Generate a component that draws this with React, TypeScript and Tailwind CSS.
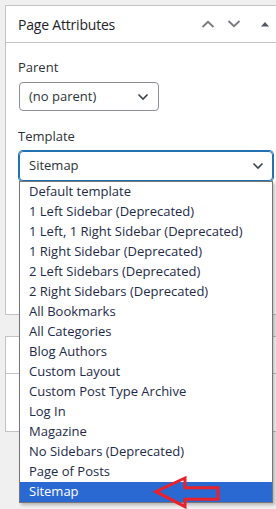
import React from "react"

const templates = [
  "Default template",
  "1 Left Sidebar (Deprecated)",
  "1 Left, 1 Right Sidebar (Deprecated)",
  "1 Right Sidebar (Deprecated)",
  "2 Left Sidebars (Deprecated)",
  "2 Right Sidebars (Deprecated)",
  "All Bookmarks",
  "All Categories",
  "Blog Authors",
  "Custom Layout",
  "Custom Post Type Archive",
  "Log In",
  "Magazine",
  "No Sidebars (Deprecated)",
  "Page of Posts",
  "Sitemap",
]

const Chevron = ({ up = false, className = "" }: { up?: boolean; className?: string }) => (
  <svg width="14" height="8" viewBox="0 0 14 8" className={className}>
    <path
      d={up ? "M1.5 7 L7 1.8 L12.5 7" : "M1.5 1 L7 6.2 L12.5 1"}
      fill="none"
      stroke="currentColor"
      strokeWidth="1.9"
    />
  </svg>
)

const SelectArrow = () => (
  <svg width="12" height="8" viewBox="0 0 12 8" className="text-[#3c434a]">
    <path d="M1.5 1.5 L6 6 L10.5 1.5" fill="none" stroke="currentColor" strokeWidth="1.6" />
  </svg>
)

const App = () => {
  return (
    <div className="relative w-[276px] h-[509px] overflow-hidden bg-[#f0f0f1] pl-[5px] pt-[5px] text-[#2c3338] font-['Open_Sans',sans-serif]">
      {/* page attributes box */}
      <div className="w-[290px] h-[310px] bg-white border border-[#c3c4c7]">
        <div className="h-[37px] flex items-center pl-3 border-b border-[#c3c4c7]">
          <h2 className="text-[14px] font-medium text-[#1d2327] tracking-[-0.2px]">Page Attributes</h2>
          <div className="ml-auto flex items-center mr-[24px]">
            <Chevron up className="text-[#787c82]" />
            <Chevron className="text-[#787c82] ml-[12px]" />
            <svg width="10" height="6" viewBox="0 0 10 6" className="ml-[19px] text-[#50575e]">
              <path d="M1 5.5 L5 1 L9 5.5 Z" fill="currentColor" />
            </svg>
          </div>
        </div>
        <div className="px-3 pt-[15px]">
          <p className="text-[13px] font-medium leading-[18px]">Parent</p>
          <div className="mt-[6px] ml-[1px] w-[140px] h-[29px] border border-[#8c8f94] rounded-[4px] flex items-center pl-[9px] pr-[9px]">
            <span className="text-[13px]">(no parent)</span>
            <span className="ml-auto"><SelectArrow /></span>
          </div>
          <p className="mt-[16px] text-[13px] font-medium leading-[18px]">Template</p>
          <div className="mt-[6px] ml-[1px] w-[254px] h-[30px] border border-[#2271b1] shadow-[0_0_0_1px_#2271b1] rounded-[4px] flex items-center pl-[9px] pr-[8px]">
            <span className="text-[13px]">Sitemap</span>
            <span className="ml-auto"><SelectArrow /></span>
          </div>
        </div>
      </div>
      {/* collapsed boxes behind */}
      <div className="mt-[21px] w-[290px] bg-white border border-[#c3c4c7]">
        <div className="h-[37px] border-b border-[#c3c4c7]" />
        <div className="h-[57px]" />
      </div>

      {/* open dropdown list */}
      <div className="absolute left-[19px] top-[181px] w-[254px] bg-white border border-[#767676] shadow-[2px_2px_3px_rgba(0,0,0,0.25)]">
        {templates.map((t) => (
          <div
            key={t}
            className={
              t === "Sitemap"
                ? "h-[20px] flex items-center pl-[9px] text-[13px] bg-[#2b69d2] text-white"
                : "h-[20px] flex items-center pl-[9px] text-[13px] text-[#1d2a4a]"
            }
          >
            {t}
          </div>
        ))}
      </div>

      {/* red annotation arrow */}
      <svg width="80" height="40" viewBox="0 0 80 40" className="absolute left-[150px] top-[474px]">
        <path
          d="M6 17.7 L35 4 L35 13.7 L68 13.7 L68 25.3 L35 25.3 L35 32.7 Z"
          fill="none"
          stroke="#e8212b"
          strokeWidth="3"
          strokeLinejoin="miter"
        />
      </svg>
    </div>
  )
}

export default App
